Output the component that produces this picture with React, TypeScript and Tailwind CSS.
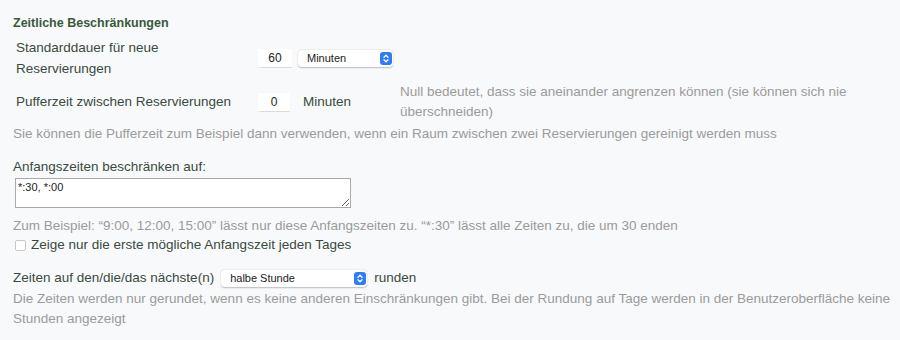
function Stepper() {
  return (
    <span className="flex h-[13px] w-[12px] items-center justify-center rounded-[3px] bg-[#2f7cf6]">
      <svg width="6" height="9" viewBox="0 0 6 9" fill="none" stroke="white" strokeWidth="1.3" strokeLinecap="round" strokeLinejoin="round">
        <path d="M1 3.2 L3 1.2 L5 3.2" />
        <path d="M1 5.8 L3 7.8 L5 5.8" />
      </svg>
    </span>
  );
}

function FakeSelect({ label, width }: { label: string; width: string }) {
  return (
    <div className={`flex h-[17px] items-center justify-between rounded-[4px] bg-white pl-[9px] pr-[1px] text-[11px] font-medium text-[#222] shadow-[0_0.5px_1.5px_rgba(0,0,0,0.25)] ${width}`}>
      <span>{label}</span>
      <Stepper />
    </div>
  );
}

function NumberBox({ value, width }: { value: string; width: string }) {
  return (
    <div className={`flex h-[18px] items-center justify-center bg-white text-[12px] text-[#222] shadow-[0_0.5px_1px_rgba(0,0,0,0.12)] ${width}`}>
      {value}
    </div>
  );
}

export default function App() {
  return (
    <div className="min-h-[340px] w-[900px] bg-[#f8f9fa] pl-[13px] pr-[2px] pt-[15px] font-['Liberation_Sans',Arial,sans-serif] text-[13.5px] text-[#3a4a3d]">
      <h2 className="text-[12.5px] font-bold leading-[16px] text-[#385a3c]">Zeitliche Beschränkungen</h2>

      {/* duration row */}
      <div className="mt-[6px] flex items-center">
        <div className="w-[245px] pl-[3px] leading-[21px]">
          Standarddauer für neue
          <br />
          Reservierungen
        </div>
        <NumberBox value="60" width="w-[34px]" />
        <div className="ml-[6px]">
          <FakeSelect label="Minuten" width="w-[95px]" />
        </div>
      </div>

      {/* buffer row */}
      <div className="mt-[3px] flex items-center">
        <div className="w-[245px] pl-[3px] leading-[20px]">Pufferzeit zwischen Reservierungen</div>
        <NumberBox value="0" width="w-[32px]" />
        <div className="ml-[13px] w-[97px]">Minuten</div>
        <div className="w-[470px] leading-[20px] text-[#9b9b9b]">
          Null bedeutet, dass sie aneinander angrenzen können (sie können sich nie überschneiden)
        </div>
      </div>

      <p className="mt-[2px] leading-[20px] text-[#9b9b9b]">
        Sie können die Pufferzeit zum Beispiel dann verwenden, wenn ein Raum zwischen zwei Reservierungen gereinigt werden muss
      </p>

      <p className="mt-[13px] leading-[20px]">Anfangszeiten beschränken auf:</p>
      <textarea
        readOnly
        value="*:30, *:00"
        className="mt-[1px] ml-[2px] block h-[30px] w-[336px] border border-[#a9a9a9] bg-white px-[2px] py-[1px] text-[11px] leading-[14px] text-[#222] outline-none"
      />

      <p className="mt-[8px] leading-[20px] text-[#9b9b9b]">
        Zum Beispiel: “9:00, 12:00, 15:00” lässt nur diese Anfangszeiten zu. “*:30” lässt alle Zeiten zu, die um 30 enden
      </p>
      <div className="flex h-[18px] items-center pl-[2px]">
        <span className="h-[11px] w-[11px] rounded-[2px] border border-[#c8c8c8] bg-white" />
        <span className="ml-[5px] leading-[18px]">Zeige nur die erste mögliche Anfangszeit jeden Tages</span>
      </div>

      <div className="mt-[14px] flex h-[20px] items-center">
        <span>Zeiten auf den/die/das nächste(n)</span>
        <div className="ml-[7px]">
          <FakeSelect label="halbe Stunde" width="w-[146px]" />
        </div>
        <span className="ml-[7px]">runden</span>
      </div>
      <p className="mt-[1px] leading-[20px] text-[#9b9b9b]">
        Die Zeiten werden nur gerundet, wenn es keine anderen Einschränkungen gibt. Bei der Rundung auf Tage werden in der Benutzeroberfläche keine Stunden angezeigt
      </p>
    </div>
  );
}
